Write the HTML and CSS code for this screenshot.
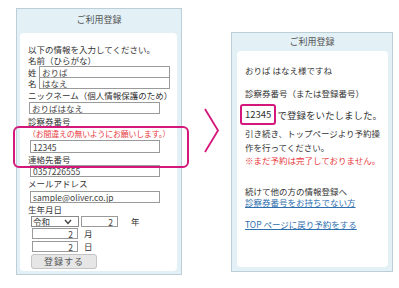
FILE: index.html
```html
<!DOCTYPE html>
<html lang="ja">
<head>
    <meta charset="UTF-8">
    <title>ご利用登録</title>
    <link rel="stylesheet" href="styles.css">
</head>
<body>
    <div class="page">
        <div class="panel formPanel">
            <div class="panelHead">ご利用登録</div>
            <div class="panelBody">
                <div class="line">以下の情報を入力してください。</div>
                <div class="line">名前（ひらがな）</div>
                <div class="nameRow">
                    <span class="nameLabel">姓</span>
                    <input class="field nameField" value="おりば">
                </div>
                <div class="nameRow second">
                    <span class="nameLabel">名</span>
                    <input class="field nameField" value="はなえ">
                </div>
                <div class="label nickLabel">ニックネーム（個人情報保護のため）</div>
                <input class="field wide nick" value="おりばはなえ">
                <div class="label cardLabel">診察券番号</div>
                <div class="label notice">（お間違えの無いようにお願いします。）</div>
                <input class="field wide card" value="12345">
                <div class="label">連絡先番号</div>
                <input class="field wide phone" value="0357226555">
                <div class="label">メールアドレス</div>
                <input class="field wide mail" value="sample@oliver.co.jp">
                <div class="label birthLabel">生年月日</div>
                <div class="dateRow">
                    <span class="era">令和
                        <svg width="8" height="6" viewBox="0 0 8 6"><path d="M1 1 L4 4.5 L7 1" fill="none" stroke="#444" stroke-width="1.4"/></svg>
                    </span>
                    <input class="field num year" value="2">
                    <span class="unit yearUnit">年</span>
                </div>
                <div class="dateRow month">
                    <input class="field num day" value="2">
                    <span class="unit">月</span>
                </div>
                <div class="dateRow dayRow">
                    <input class="field num day" value="2">
                    <span class="unit">日</span>
                </div>
                <button class="submit">登録する</button>
            </div>
            <div class="highlight"></div>
        </div>

        <div class="arrow">
            <svg width="16" height="46" viewBox="0 0 16 46"><path d="M1 1 L14 22.5 L1 44" fill="none" stroke="#d4177a" stroke-width="1.8"/></svg>
        </div>

        <div class="panel donePanel">
            <div class="panelHead">ご利用登録</div>
            <div class="panelBody">
                <div class="msg">おりば はなえ様ですね</div>
                <div class="msg cardNo">診察券番号（または登録番号）</div>
                <div class="done"><span class="number">12345</span>で登録をいたしました。</div>
                <div class="msg guide">引き続き、トップページより予約操<br>作を行ってください。</div>
                <div class="msg warn">※まだ予約は完了しておりません。</div>
                <div class="msg next">続けて他の方の情報登録へ</div>
                <a class="link" href="#">診察券番号をお持ちでない方</a>
                <a class="link topLink" href="#">TOP ページに戻り予約をする</a>
            </div>
        </div>
    </div>
</body>
</html>
```

FILE: styles.css
```css
body {
    margin: 0;
    background: #fff;
    color: #333;
    font-family: "Noto Sans CJK JP", "Noto Sans", sans-serif;
    font-size: 8.5px;
}
.page {
    display: flex;
    align-items: flex-start;
}
.panel {
    position: relative;
    box-sizing: border-box;
    display: flex;
    flex-direction: column;
    background: #e3f1f7;
    border: 1px solid #bccfd9;
}
.panelHead {
    text-align: center;
    color: #555;
    font-size: 9px;
    flex: none;
}
.panelBody {
    flex: 1;
    background: #fff;
    border-radius: 4px;
    padding-left: 8px;
    display: flex;
    flex-direction: column;
    align-items: flex-start;
    white-space: nowrap;
}

/* left: input form */
.formPanel {
    width: 166px;
    height: 267px;
    margin: 8px 0 0 16px;
}
.formPanel .panelHead {
    height: 21px;
    line-height: 21px;
}
.formPanel .panelBody {
    margin: 3px 4px 3px 3px;
    padding-top: 11px;
}
.line {
    line-height: 11px;
}
.label {
    line-height: 12px;
}
.nickLabel {
    line-height: 13px;
}
.cardLabel {
    line-height: 14px;
}
.notice {
    color: #e8383d;
    font-size: 7.9px;
    letter-spacing: -0.15px;
    line-height: 11px;
}
.birthLabel {
    line-height: 13px;
}
.nameRow {
    display: flex;
    align-items: center;
    height: 12px;
}
.nameRow.second {
    margin-top: -1px;
}
.nameLabel {
    width: 11px;
    line-height: 12px;
}
.field {
    box-sizing: border-box;
    margin: 0;
    padding: 0 2px;
    border: 1px solid #9a9a9a;
    background: #fff;
    color: #444;
    font-family: "Noto Sans CJK JP", "Noto Sans", sans-serif;
    font-size: 8.5px;
    outline: none;
}
.nameField {
    width: 131px;
    height: 12px;
}
.wide {
    width: 130px;
    height: 12px;
    margin-left: 2px;
}
.nick {
    width: 131px;
    margin-left: 1px;
}
.card {
    height: 13px;
    margin-top: 1px;
}
.mail {
    margin-top: 2px;
}
.dateRow {
    display: flex;
    align-items: center;
    height: 11px;
    margin-left: 3px;
}
.dateRow.month {
    margin-top: 1px;
    margin-left: 4px;
}
.dateRow.dayRow {
    margin-top: 2px;
    margin-left: 4px;
}
.era {
    box-sizing: border-box;
    width: 48px;
    height: 11px;
    border: 1px solid #8a8a8a;
    display: flex;
    align-items: center;
    justify-content: space-between;
    padding: 0 6px 0 1px;
    line-height: 9px;
}
.num {
    height: 11px;
    text-align: right;
    padding-right: 4px;
}
.year {
    width: 37px;
    margin-left: 2px;
}
.day {
    width: 46px;
}
.unit {
    margin-left: 6px;
    line-height: 11px;
}
.yearUnit {
    margin-left: 13px;
}
.submit {
    box-sizing: border-box;
    width: 66px;
    height: 15px;
    margin: 2px 0 0 3px;
    padding: 0;
    background: #e6e6e6;
    border: 1px solid #c4c4c4;
    border-radius: 3px;
    color: #555;
    font-family: "Noto Sans CJK JP", "Noto Sans", sans-serif;
    font-size: 9px;
    letter-spacing: 1px;
}
.highlight {
    position: absolute;
    left: -4px;
    top: 117px;
    width: 176px;
    height: 42px;
    box-sizing: border-box;
    border: 2px solid #d4177a;
    border-radius: 6px;
}

/* middle arrow */
.arrow {
    flex: none;
    box-sizing: border-box;
    width: 49px;
    padding: 108px 0 0 22px;
}
.arrow svg {
    display: block;
}

/* right: result */
.donePanel {
    width: 162px;
    height: 240px;
    margin-top: 32px;
}
.donePanel .panelHead {
    height: 15px;
    line-height: 17px;
}
.donePanel .panelBody {
    margin: 3px 4px 4px 5px;
    padding-top: 13px;
}
.msg {
    line-height: 12px;
}
.cardNo {
    margin-top: 11px;
}
.done {
    display: flex;
    align-items: center;
    margin-top: 5px;
    height: 21px;
    font-size: 9.5px;
}
.number {
    box-sizing: border-box;
    height: 21px;
    line-height: 17px;
    padding: 0 3px;
    margin-left: -5px;
    margin-right: 1px;
    border: 2px solid #d4177a;
    border-radius: 3px;
}
.guide {
    margin-top: 1px;
    line-height: 14px;
}
.warn {
    color: #e8383d;
    line-height: 13px;
}
.next {
    margin-top: 19px;
    line-height: 11px;
}
.link {
    color: #2f6fae;
    line-height: 11px;
    text-decoration: underline;
}
.topLink {
    margin-top: 11px;
}
```
